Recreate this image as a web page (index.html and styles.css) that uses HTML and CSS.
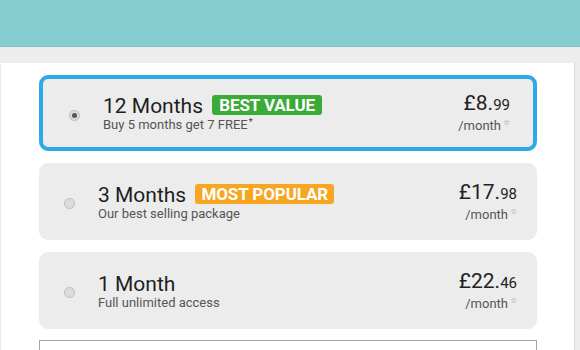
FILE: index.html
```html
<!DOCTYPE html>
<html>
<head>
<meta charset="utf-8">
<link rel="stylesheet" href="styles.css">
</head>
<body>
<div class="header"></div>
<div class="band"></div>
<div class="panel">
  <div class="plans">
    <div class="card selected">
      <span class="radio checked"></span>
      <div class="info">
        <div class="title">12 Months <span class="badge green">BEST VALUE</span></div>
        <div class="sub">Buy 5 months get 7 FREE<sup class="ast">*</sup></div>
      </div>
      <div class="price">
        <div class="amount">£8.<small>99</small></div>
        <div class="per">/month<sup class="star">☆</sup></div>
      </div>
    </div>
    <div class="card">
      <span class="radio"></span>
      <div class="info">
        <div class="title">3 Months <span class="badge orange">MOST POPULAR</span></div>
        <div class="sub">Our best selling package</div>
      </div>
      <div class="price">
        <div class="amount">£17.<small>98</small></div>
        <div class="per">/month<sup class="star">☆</sup></div>
      </div>
    </div>
    <div class="card">
      <span class="radio"></span>
      <div class="info">
        <div class="title">1 Month</div>
        <div class="sub">Full unlimited access</div>
      </div>
      <div class="price">
        <div class="amount">£22.<small>46</small></div>
        <div class="per">/month<sup class="star">☆</sup></div>
      </div>
    </div>
    <div class="field"></div>
  </div>
</div>
</body>
</html>
```
FILE: styles.css
```css
html, body {
  margin: 0;
  padding: 0;
}
body {
  width: 580px;
  height: 350px;
  overflow: hidden;
  background: #ededed;
  font-family: Roboto, "Liberation Sans", sans-serif;
  color: #222;
}
.header {
  height: 46px;
  background: #86cdcf;
  border-bottom: 1px solid #79c3c5;
}
.band {
  height: 16px;
  background: #ededed;
}
.panel {
  margin-left: 1px;
  width: 574px;
  height: 287px;
  overflow: hidden;
  background: #fff;
  border-right: 1px solid #dadada;
  box-sizing: border-box;
  padding: 12px 0 0 38px;
}
.plans {
  width: 498px;
  display: flex;
  flex-direction: column;
  gap: 12px;
}
.card {
  height: 77px;
  box-sizing: border-box;
  background: #ececec;
  border-radius: 9px;
  display: flex;
  align-items: center;
  padding: 0 20px 0 25px;
}
.card.selected {
  height: 76px;
  border: 4px solid #2ea8e8;
  padding: 0 23px 0 26px;
}
.radio {
  width: 11px;
  height: 11px;
  box-sizing: border-box;
  border-radius: 50%;
  background: #dcdcdc;
  border: 1px solid #bdbdbd;
  display: flex;
  align-items: center;
  justify-content: center;
  margin-top: 4px;
  flex: none;
}
.radio.checked::after {
  content: "";
  width: 5px;
  height: 5px;
  border-radius: 50%;
  background: #555;
}
.info {
  margin-left: 23px;
  flex: 1;
}
.title {
  font-size: 21px;
  line-height: 24px;
  color: #1e1e1e;
  white-space: nowrap;
}
.badge {
  display: inline-block;
  vertical-align: 2px;
  margin-left: 4px;
  font-size: 17px;
  line-height: 20px;
  font-weight: 700;
  color: #fff;
  padding: 0 6px;
  border-radius: 3px;
  letter-spacing: -0.1px;
}
.badge.green { background: #3aab37; padding: 0 7px; }
.badge.orange { background: #f8a621; }
.sub {
  font-size: 13px;
  line-height: 14px;
  color: #555;
}
.ast {
  font-size: 9px;
  vertical-align: 4px;
  line-height: 0;
  margin-left: 1px;
  color: #333;
}
.price {
  text-align: right;
  white-space: nowrap;
}
.amount {
  font-size: 21px;
  line-height: 22px;
  color: #222;
}
.amount small {
  font-size: 15px;
}
.per {
  font-size: 13px;
  line-height: 16px;
  color: #555;
  margin-top: 2px;
}
.star {
  font-size: 8px;
  line-height: 0;
  vertical-align: 5px;
  margin-left: 2px;
  color: #777;
}
.field {
  margin-top: -1px;
  height: 30px;
  border: 1px solid #a5a5a5;
  border-bottom: none;
  background: #fff;
}
```
